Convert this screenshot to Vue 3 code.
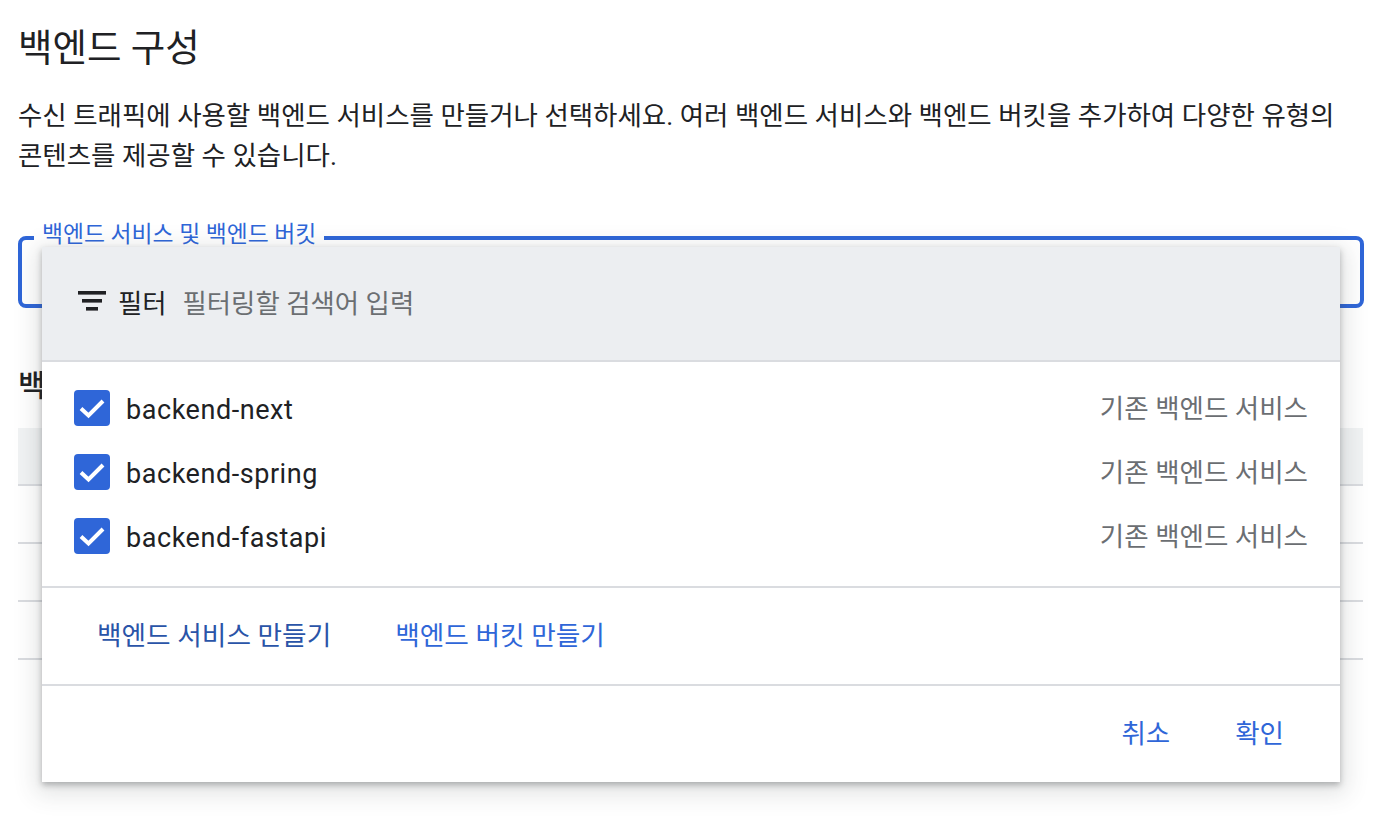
<script setup>
const items = ['backend-next', 'backend-spring', 'backend-fastapi']
const tableRows = [1, 2, 3]
</script>

<template>
  <main class="page">
    <h1 class="title">백엔드 구성</h1>
    <p class="desc">수신 트래픽에 사용할 백엔드 서비스를 만들거나 선택하세요. 여러 백엔드 서비스와 백엔드 버킷을 추가하여 다양한 유형의 콘텐츠를 제공할 수 있습니다.</p>

    <div class="field">
      <span class="legend">백엔드 서비스 및 백엔드 버킷</span>
      <div class="menu">
        <div class="filter">
          <svg class="filter-icon" width="28" height="20" viewBox="0 0 28 20">
            <rect x="0" y="0" width="28" height="3.6" fill="#202124" />
            <rect x="4" y="8" width="20" height="3.6" fill="#202124" />
            <rect x="8" y="16" width="12" height="3.6" fill="#202124" />
          </svg>
          <span class="filter-label">필터</span>
          <span class="filter-hint">필터링할 검색어 입력</span>
        </div>
        <ul class="options">
          <li v-for="item in items" :key="item" class="option">
            <span class="check">
              <svg width="36" height="36" viewBox="0 0 36 36">
                <path d="M7 18.5 L14.5 25.5 L29 11" fill="none" stroke="#fff" stroke-width="4" />
              </svg>
            </span>
            <span class="option-name">{{ item }}</span>
            <span class="option-type">기존 백엔드 서비스</span>
          </li>
        </ul>
        <div class="creates">
          <a class="create dark">백엔드 서비스 만들기</a>
          <a class="create">백엔드 버킷 만들기</a>
        </div>
        <div class="actions">
          <button class="action">취소</button>
          <button class="action">확인</button>
        </div>
      </div>
    </div>

    <h2 class="subtitle">백엔드</h2>
    <div class="table">
      <div class="thead"></div>
      <div v-for="r in tableRows" :key="r" class="trow"></div>
    </div>
  </main>
</template>

<style>
html, body { background: #fff; }
</style>

<style scoped>
.page {
  box-sizing: border-box;
  width: 1388px;
  height: 834px;
  overflow: hidden;
  padding: 24px 24px 0 18px;
  font-family: Roboto, "Noto Sans CJK KR", sans-serif;
  color: #202124;
}
.title {
  margin: 0;
  font-size: 37.5px;
  line-height: 48px;
  font-weight: 400;
}
.desc {
  margin: 24px 0 0;
  font-size: 26.48px;
  line-height: 40px;
  width: 1346px;
}
.field {
  position: relative;
  box-sizing: border-box;
  height: 72px;
  margin-top: 60px;
  border: 4px solid #2f66d8;
  border-radius: 8px;
}
.legend {
  position: absolute;
  left: 12px;
  top: -20px;
  padding: 0 8px;
  background: #fff;
  font-size: 22.8px;
  line-height: 30px;
  color: #2f66d8;
  white-space: nowrap;
}
.menu {
  position: absolute;
  left: 20px;
  top: 7px;
  width: 1298px;
  height: 535px;
  z-index: 2;
  display: flex;
  flex-direction: column;
  background: #fff;
  box-shadow: 0 3px 6px rgba(60, 64, 67, 0.35), 0 6px 22px 6px rgba(60, 64, 67, 0.14);
}
.filter {
  box-sizing: border-box;
  height: 115px;
  flex: none;
  display: flex;
  align-items: center;
  padding: 0 0 5px 36px;
  background: #eceef1;
  border-bottom: 2px solid #dadce0;
  font-size: 26.4px;
}
.filter-label { margin-left: 12px; }
.filter-hint { margin-left: 16px; color: #6b6e72; }
.options {
  list-style: none;
  margin: 0;
  padding: 14px 32px 18px;
  flex: none;
}
.option {
  height: 64px;
  display: flex;
  align-items: center;
  font-size: 27px;
}
.check {
  width: 36px;
  height: 36px;
  border-radius: 4px;
  background: #2f66d8;
  display: block;
  flex: none;
}
.check svg { display: block; }
.option-name { margin-left: 16px; margin-top: 3px; letter-spacing: 0.55px; }
.option-type { margin-left: auto; padding-bottom: 3px; font-size: 26.5px; color: #6b6e72; }
.creates {
  box-sizing: border-box;
  height: 100px;
  flex: none;
  display: flex;
  align-items: center;
  gap: 64px;
  padding: 0 0 6px 55px;
  border-top: 2px solid #dadce0;
  border-bottom: 2px solid #dadce0;
}
.create {
  font-size: 26.7px;
  font-weight: 400;
  color: #2f66d8;
}
.create.dark { color: #2a54a8; }
.actions {
  flex: 1;
  display: flex;
  align-items: center;
  justify-content: flex-end;
  gap: 65px;
  padding: 0 56px 6px 0;
}
.action {
  border: 0;
  background: none;
  padding: 0;
  font: inherit;
  font-size: 26.5px;
  font-weight: 400;
  color: #2f66d8;
}
.subtitle {
  margin: 60px 0 0;
  font-size: 30px;
  line-height: 36px;
  font-weight: 500;
}
.table { margin: 24px 1px 0 0; }
.thead {
  height: 56px;
  background: #f1f3f4;
  border-bottom: 2px solid #dadce0;
}
.trow {
  height: 56px;
  border-bottom: 2px solid #dadce0;
}
</style>
